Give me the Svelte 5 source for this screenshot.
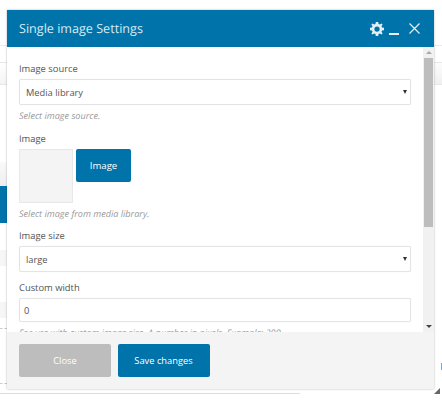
<script>
  const sources = ['Media library'];
  const sizes = ['large'];
</script>

<div class="page">
  <div class="backdrop">
    <div class="side left">
      <div class="bg-line first"></div>
      <div class="bg-tabs"></div>
      <div class="bg-bar"></div>
      <div class="bg-blue"></div>
      <div class="bg-row"></div>
      <div class="bg-row second"></div>
      <div class="bg-dash"></div>
      <div class="bg-dash late"></div>
      <div class="bg-foot"></div>
    </div>
    <div class="side right">
      <div class="bg-line first"></div>
      <div class="bg-tabs"></div>
      <div class="bg-tick"></div>
    </div>
  </div>

  <div class="modal">
    <header class="head">
      <h2>Single image Settings</h2>
      <div class="tools">
        <svg class="gear" viewBox="0 0 24 24" width="14" height="14" aria-hidden="true">
          <path fill="currentColor" fill-rule="evenodd" d="M10 0h4l.7 3.400 2.200.9 2.900-1.900 1.800 1.800-1.900 2.900.9 2.200 3.400.7v4l-3.400.7-.9 2.200 1.900 2.900-1.800 1.800-2.900-1.900-2.200.9-.7 3.400h-4l-.7-3.400-2.200-.9-2.900 1.900-1.800-1.800 1.900-2.900-.9-2.200L0 14v-4l3.400-.7.9-2.200-1.900-2.900 1.800-1.800 2.900 1.900 2.200-.9zM12 7.500a4.500 4.500 0 1 0 0 9 4.500 4.500 0 0 0 0-9z"/>
        </svg>
        <span class="minimize"></span>
        <svg class="close" viewBox="0 0 11 11" width="11" height="11" aria-hidden="true">
          <path d="M.5.500l10 10M10.500.5l-10 10" stroke="currentColor" stroke-width="1.200" fill="none"/>
        </svg>
      </div>
    </header>

    <div class="body">
      <div class="form">
        <div class="field">
          <div class="label">Image source</div>
          <div class="select-wrap">
            <select class="control">
              {#each sources as s}<option>{s}</option>{/each}
            </select>
          </div>
          <div class="help">Select image source.</div>
        </div>

        <div class="field tight">
          <div class="label">Image</div>
          <div class="picker">
            <div class="thumb"></div>
            <button class="btn primary small">Image</button>
          </div>
          <div class="help">Select image from media library.</div>
        </div>

        <div class="field tight">
          <div class="label">Image size</div>
          <div class="select-wrap">
            <select class="control">
              {#each sizes as s}<option>{s}</option>{/each}
            </select>
          </div>
        </div>

        <div class="field">
          <div class="label">Custom width</div>
          <input class="control text" value="0" />
          <div class="help">For use with custom image size. A number in pixels. Example: 200</div>
        </div>
      </div>

      <div class="scrollbar">
        <div class="arrow up"></div>
        <div class="track"><div class="handle"></div></div>
        <div class="arrow down"></div>
      </div>
    </div>

    <footer class="foot">
      <button class="btn muted">Close</button>
      <button class="btn primary">Save changes</button>
    </footer>
  </div>

  <svg class="grip" viewBox="0 0 6 6" width="6" height="6" aria-hidden="true">
    <path d="M6 0v6H0z" fill="#666"/>
  </svg>
</div>

<style>
  :global(body) {
    background: #fff;
    font-family: "Open Sans", sans-serif;
    text-rendering: geometricPrecision;
    overflow: hidden;
  }

  .page {
    position: relative;
    width: 442px;
    height: 400px;
    overflow: hidden;
  }

  .backdrop {
    display: flex;
    justify-content: space-between;
    height: 100%;
  }

  .side {
    display: flex;
    flex-direction: column;
  }
  .side.left { width: 7px; }
  .side.right { width: 8px; }

  .bg-line { height: 1px; background: #ececec; }
  .bg-line.first { margin-top: 45px; }
  .bg-tabs {
    height: 21px;
    margin-top: 16px;
    border-top: 1px solid #e8e8e8;
    border-bottom: 1px solid #e8e8e8;
    background: linear-gradient(#fff, #f4f4f4);
  }
  .right .bg-tabs { background: linear-gradient(#fcfcfc, #f0f0f0); }
  .bg-bar {
    flex: none;
    height: 24px;
    margin-top: 77px;
    background: linear-gradient(#fafafa, #eee);
  }
  .bg-blue { flex: none; height: 37px; background: #0073aa; }
  .bg-row { flex: none; height: 16px; margin-top: 27px; background: #f6f6f6; }
  .bg-row.second { margin-top: 36px; }
  .bg-dash { flex: none; width: 7px; margin-top: 10px; border-top: 1px dashed #ccc; }
  .bg-dash.late { margin-top: 54px; }
  .bg-foot { flex: none; width: 300px; margin-top: 9px; border-top: 1px solid #ddd; }
  .bg-tick {
    width: 1px;
    height: 7px;
    margin: 278px 0 0 7px;
    background: #7ea3d8;
  }

  .modal {
    position: absolute;
    left: 7px;
    top: 10px;
    width: 427px;
    height: 379px;
    display: flex;
    flex-direction: column;
    background: #fff;
    box-shadow: 0 0 2px rgba(0, 0, 0, 0.3);
  }

  .grip {
    position: absolute;
    left: 434px;
    top: 388px;
  }

  .head {
    flex: none;
    height: 37px;
    display: flex;
    align-items: center;
    justify-content: space-between;
    padding: 0 14px 0 12px;
    background: #0073aa;
    box-sizing: border-box;
  }

  h2 {
    margin: 0;
    font-size: 12.600px;
    font-weight: 400;
    color: #d9ebf3;
  }

  .tools {
    display: flex;
    align-items: center;
    color: #e4f0f6;
  }
  .gear { margin-right: 5px; }
  .minimize {
    width: 10px;
    height: 1.500px;
    margin: 11px 10px 0 0;
    background: currentColor;
  }

  .body {
    flex: 1;
    min-height: 0;
    display: flex;
    overflow: hidden;
  }

  .form {
    flex: 1;
    min-width: 0;
    padding: 14px 12px 0 12px;
    color: #555;
  }

  .field { margin-bottom: 9px; }
  .field.tight { margin-bottom: 8px; }

  .label {
    font-size: 9.400px;
    font-weight: 500;
    line-height: 16px;
    margin-bottom: 2px;
    color: #555;
  }

  .select-wrap { position: relative; }
  .select-wrap::after {
    content: "";
    position: absolute;
    right: 4px;
    top: 11px;
    border: 2.500px solid transparent;
    border-top: 4px solid #333;
    border-bottom: 0;
    pointer-events: none;
  }

  .control {
    display: block;
    width: 100%;
    height: 26px;
    box-sizing: border-box;
    padding: 0 4px 0 2px;
    font: 400 9.300px "Open Sans", sans-serif;
    color: #555;
    background: #fff;
    border: 1px solid #e4e4e4;
    border-radius: 2px;
    box-shadow: 0 0 1px rgba(0, 0, 0, 0.1);
    outline: none;
    appearance: none;
  }
  select.control { padding-left: 6px; }
  .control.text { padding-left: 4px; height: 24px; }

  .help {
    margin-top: 4px;
    font-size: 9.100px;
    font-style: italic;
    line-height: 13px;
    color: #999;
    white-space: nowrap;
  }

  .picker {
    display: flex;
    align-items: flex-start;
    gap: 3px;
  }
  .thumb {
    width: 52px;
    height: 52px;
    background: #f4f4f4;
    border: 1px solid #e8e8e8;
  }

  .btn {
    font: 400 9.300px "Open Sans", sans-serif;
    border: 0;
    border-radius: 2px;
    padding: 0;
    height: 33px;
    width: 92px;
    color: #fff;
  }
  .btn.small { width: 55px; font-size: 9.600px; }
  .primary { background: #0073aa; }
  .muted { background: #bdbdbd; }

  .scrollbar {
    flex: none;
    width: 11px;
    display: flex;
    flex-direction: column;
    background: #f1f1f1;
  }
  .arrow { flex: none; height: 11px; position: relative; }
  .arrow::after {
    content: "";
    position: absolute;
    left: 2.500px;
    top: 4px;
    border: 3px solid transparent;
  }
  .arrow.up::after { border-bottom-color: #a8a8a8; border-top: 0; }
  .arrow.down::after { border-top-color: #444; border-bottom: 0; }
  .track { flex: 1; }
  .handle { height: 169px; margin: 0 1px; background: #bdbdbd; }

  .foot {
    flex: none;
    height: 57px;
    box-sizing: border-box;
    display: flex;
    align-items: flex-start;
    gap: 6.500px;
    padding: 12px 12px 0;
    background: #f4f4f4;
  }
</style>
